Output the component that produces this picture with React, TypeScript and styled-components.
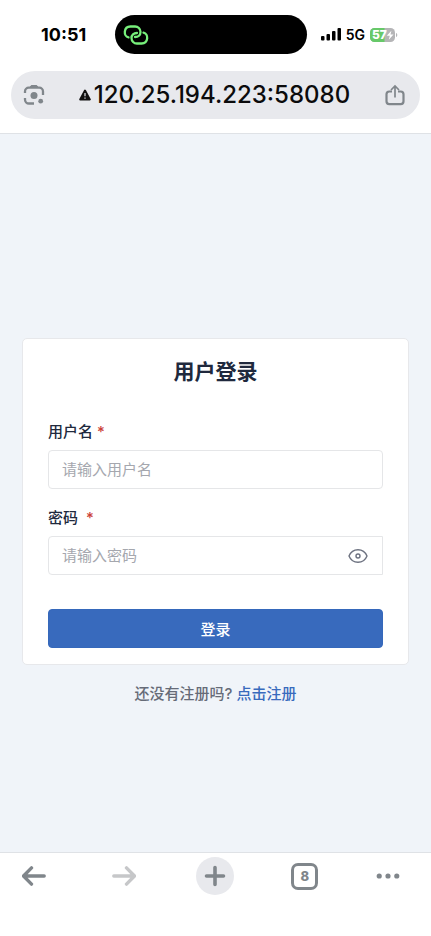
import React, { useState } from "react";
import styled, { createGlobalStyle } from "styled-components";

const GlobalStyle = createGlobalStyle`
  * { box-sizing: border-box; }
  body {
    margin: 0;
    background: #ffffff;
    color: #20293d;
    font-family: Inter, "Noto Sans CJK SC", sans-serif;
  }
  button, input { font: inherit; }
`;

const Screen = styled.div`
  display: flex;
  flex-direction: column;
  min-height: 100vh;
`;

const StatusBar = styled.div`
  display: flex;
  align-items: center;
  justify-content: space-between;
  padding: 15px 33px 16px 24px;
  color: #000000;
`;

const Clock = styled.time`
  flex: 1;
  text-indent: 17px;
  font-size: 18px;
  font-weight: 700;
  line-height: 20px;
`;

const Island = styled.div`
  display: flex;
  align-items: center;
  width: 192px;
  height: 39px;
  padding-left: 8px;
  border-radius: 20px;
  background: #000000;
`;

const Signals = styled.div`
  flex: 1;
  display: flex;
  align-items: center;
  justify-content: flex-end;
  gap: 5px;
  font-size: 14px;
  font-weight: 600;
  line-height: 20px;
`;

const AddressRow = styled.header`
  padding: 1px 11px 14px;
  border-bottom: 1px solid #dfe2e6;
`;

const AddressPill = styled.div`
  display: flex;
  align-items: center;
  justify-content: space-between;
  height: 48px;
  padding: 0 13px 0 11px;
  border-radius: 24px;
  background: #e8e9ed;
`;

const Address = styled.div`
  display: flex;
  align-items: center;
  gap: 3px;
  color: #0b0b0c;
  font-size: 24px;
  font-weight: 500;
  line-height: 32px;
`;

const IconButton = styled.button<{ $round?: boolean }>`
  display: flex;
  align-items: center;
  justify-content: center;
  padding: 0;
  border: 0;
  width: ${(p) => (p.$round ? 38 : 24)}px;
  height: ${(p) => (p.$round ? 38 : 24)}px;
  border-radius: 50%;
  background: ${(p) => (p.$round ? "#e8e9ed" : "transparent")};
  color: #80868b;
  &:disabled { color: #c6c7c9; }
`;

const Content = styled.main`
  flex: 1;
  display: flex;
  flex-direction: column;
  padding: 204px 22px 0;
  background: #f0f4f9;
`;

const Card = styled.form`
  display: flex;
  flex-direction: column;
  padding: 17px 25px 16px;
  border: 1px solid #e7e8eb;
  border-radius: 5px;
  background: #ffffff;
`;

const Title = styled.h1`
  margin: 0 0 33px;
  font-size: 21px;
  font-weight: 700;
  line-height: 32px;
  text-align: center;
`;

const Field = styled.div`
  display: flex;
  flex-direction: column;
  gap: 7px;
  margin-bottom: 18px;
`;

const Label = styled.label`
  font-size: 15px;
  font-weight: 500;
  line-height: 22px;
`;

const Required = styled.span<{ $wide?: boolean }>`
  margin-left: ${(p) => (p.$wide ? 8 : 4)}px;
  color: #cb4139;
`;

const InputBox = styled.div<{ $square?: boolean }>`
  display: flex;
  align-items: center;
  height: 39px;
  padding: 0 12px 0 13px;
  border: 1px solid #e5e6e8;
  border-radius: ${(p) => (p.$square ? "4px 0 0 4px" : "4px")};
  background: #ffffff;
`;

const TextInput = styled.input`
  flex: 1;
  min-width: 0;
  padding: 0;
  border: 0;
  outline: 0;
  background: transparent;
  color: #20293d;
  font-size: 15px;
  line-height: 24px;
  &::placeholder { color: #a5a7ae; opacity: 1; }
`;

const EyeButton = styled(IconButton)`
  color: #6d7280;
`;

const Submit = styled.button`
  height: 39px;
  margin-top: 16px;
  padding: 0;
  border: 1px solid #3568bb;
  border-radius: 4px;
  background: #386abd;
  color: #ffffff;
  font-size: 15px;
  font-weight: 500;
`;

const Register = styled.p`
  margin: 17px 0;
  color: #666b78;
  font-size: 15px;
  font-weight: 500;
  line-height: 24px;
  text-align: center;
`;

const RegisterLink = styled.a`
  color: #386abd;
  text-decoration: none;
`;

const Toolbar = styled.nav`
  display: flex;
  align-items: flex-start;
  justify-content: space-between;
  height: 84px;
  padding: 3px 31px 0 15px;
  border-top: 1px solid #dfe2e6;
  background: #ffffff;
`;

const ToolSlot = styled.div<{ $narrow?: boolean }>`
  display: flex;
  align-items: center;
  justify-content: center;
  width: ${(p) => (p.$narrow ? 24 : 38)}px;
  height: 40px;
`;

const TabCount = styled.button`
  display: flex;
  align-items: center;
  justify-content: center;
  width: 27px;
  height: 27px;
  padding: 0;
  border: 3px solid #80868b;
  border-radius: 7px;
  background: transparent;
  color: #80868b;
  font-size: 13px;
  font-weight: 800;
`;

function LinkGlyph() {
  return (
    <svg width="26" height="22" viewBox="0 0 26 22" fill="none" stroke="#77ef7b" strokeWidth="2.3" strokeLinecap="round">
      <path d="M5.5 13.4C.2 12.3.4 2.5 7.4 2.5H12a5.4 5.4 0 0 1 5.500 5.400c0 3-2.200 5.100-5.500 5.100" />
      <path d="M20.500 8.600c5.300 1.100 5.100 10.900-1.900 10.900H14a5.400 5.400 0 0 1-5.500-5.400c0-3 2.200-5.100 5.500-5.100" />
    </svg>
  );
}

function Battery() {
  return (
    <svg width="28" height="14" viewBox="0 0 28 14">
      <rect width="25" height="14" rx="4.5" fill="#b5b5b7" />
      <path d="M4.5 0H14.5V14H4.5A4.5 4.5 0 0 1 0 9.5v-5A4.5 4.5 0 0 1 4.5 0Z" fill="#67c969" />
      <path d="M26 5c1.7.5 1.7 3.5 0 4Z" fill="#b5b5b7" />
      <text x="2" y="11.2" fill="#fff" fontFamily="Inter, sans-serif" fontSize="12" fontWeight="800">57</text>
      <path d="m21.4 2.7-4.600 5h3l-1 4.100 4.700-5.400h-3Z" fill="#fff" />
    </svg>
  );
}

function LensIcon() {
  return (
    <svg width="22" height="22" viewBox="0 0 22 22" fill="none" stroke="currentColor" strokeWidth="2.3">
      <path d="M2 9V7.500a3.800 3.800 0 0 1 3.800-3.800h10.400A3.800 3.800 0 0 1 20 7.500v3.500M2 14v1.500a4 4 0 0 0 4 4h5" />
      <path d="m7 3.5 1.2-2h5.6l1.2 2Z" fill="currentColor" strokeWidth="1" />
      <circle cx="11" cy="11.5" r="3.500" fill="currentColor" stroke="none" />
      <circle cx="17.700" cy="17.200" r="2.400" fill="currentColor" stroke="none" />
    </svg>
  );
}

function ShareIcon() {
  return (
    <svg width="20" height="22" viewBox="0 0 20 22" fill="none" stroke="currentColor" strokeWidth="2.2">
      <path d="M7 7.5H4.300a2.800 2.800 0 0 0-2.800 2.800v7a2.800 2.800 0 0 0 2.800 2.800h11.400a2.800 2.800 0 0 0 2.800-2.800v-7a2.800 2.800 0 0 0-2.800-2.800H13" />
      <path d="M10 13.500V2M6 6l4-4 4 4" strokeWidth="1.700" />
    </svg>
  );
}

function ArrowIcon({ forward = false }: { forward?: boolean }) {
  return (
    <svg width="24" height="20" viewBox="0 0 24 20" fill="none" stroke="currentColor" strokeWidth="3.4" strokeLinecap="round" strokeLinejoin="round">
      <path d={forward ? "M1.8 10H22M14.5 1.9l8 8.1-8 8.1" : "M22.2 10H2M9.5 1.9 1.5 10l8 8.1"} />
    </svg>
  );
}

export default function App() {
  const [visible, setVisible] = useState(false);
  return (
    <>
      <GlobalStyle />
      <Screen>
        <StatusBar>
          <Clock>10:51</Clock>
          <Island><LinkGlyph /></Island>
          <Signals>
            <svg width="20" height="13" viewBox="0 0 20 13" aria-label="信号">
              <rect y="8" width="3.5" height="4.5" rx="1" />
              <rect x="5.5" y="6" width="3.5" height="6.5" rx="1" />
              <rect x="11" y="3" width="3.5" height="9.5" rx="1" />
              <rect x="16.5" width="3.5" height="12.5" rx="1" />
            </svg>
            <span>5G</span>
            <Battery />
          </Signals>
        </StatusBar>
        <AddressRow>
          <AddressPill>
            <IconButton type="button" aria-label="图片搜索"><LensIcon /></IconButton>
            <Address>
              <svg width="12" height="12" viewBox="0 0 12 12">
                <path d="M6 1.6 10.800 10.400H1.200Z" fill="#111" stroke="#111" strokeWidth="2" strokeLinejoin="round" />
                <path d="M6 4v3.200M6 8.400v1.300" stroke="#e8e9ed" strokeWidth="1.2" />
              </svg>
              <span>120.25.194.223:58080</span>
            </Address>
            <IconButton type="button" aria-label="分享"><ShareIcon /></IconButton>
          </AddressPill>
        </AddressRow>
        <Content>
          <Card onSubmit={(e) => e.preventDefault()}>
            <Title>用户登录</Title>
            <Field>
              <Label htmlFor="username">用户名<Required>*</Required></Label>
              <InputBox>
                <TextInput id="username" placeholder="请输入用户名" autoComplete="username" />
              </InputBox>
            </Field>
            <Field>
              <Label htmlFor="password">密码<Required $wide>*</Required></Label>
              <InputBox $square>
                <TextInput id="password" type={visible ? "text" : "password"} placeholder="请输入密码" autoComplete="current-password" />
                <EyeButton type="button" aria-label="显示密码" onClick={() => setVisible(!visible)}>
                  <svg width="20" height="16" viewBox="0 0 20 16" fill="none" stroke="currentColor" strokeWidth="1.4">
                    <path d="M1 8c1.5-3.6 4.8-6.3 9-6.3S17.500 4.400 19 8c-1.500 3.600-4.800 6.300-9 6.300S2.500 11.600 1 8Z" strokeLinejoin="round" />
                    <circle cx="10" cy="8" r="2" />
                  </svg>
                </EyeButton>
              </InputBox>
            </Field>
            <Submit type="submit">登录</Submit>
          </Card>
          <Register>还没有注册吗? <RegisterLink href="#register">点击注册</RegisterLink></Register>
        </Content>
        <Toolbar>
          <ToolSlot><IconButton type="button" aria-label="后退"><ArrowIcon /></IconButton></ToolSlot>
          <ToolSlot><IconButton type="button" aria-label="前进" disabled><ArrowIcon forward /></IconButton></ToolSlot>
          <ToolSlot>
            <IconButton type="button" $round aria-label="新标签页">
              <svg width="22" height="22" viewBox="0 0 22 22" stroke="currentColor" strokeWidth="3.6" strokeLinecap="round">
                <path d="M11 2.500v17M2.500 11h17" />
              </svg>
            </IconButton>
          </ToolSlot>
          <ToolSlot><TabCount type="button" aria-label="标签页">8</TabCount></ToolSlot>
          <ToolSlot $narrow>
            <IconButton type="button" aria-label="更多">
              <svg width="26" height="6" viewBox="0 0 26 6" fill="currentColor">
                <circle cx="3.500" cy="3" r="2.800" /><circle cx="13" cy="3" r="2.800" /><circle cx="22.500" cy="3" r="2.800" />
              </svg>
            </IconButton>
          </ToolSlot>
        </Toolbar>
      </Screen>
    </>
  );
}
